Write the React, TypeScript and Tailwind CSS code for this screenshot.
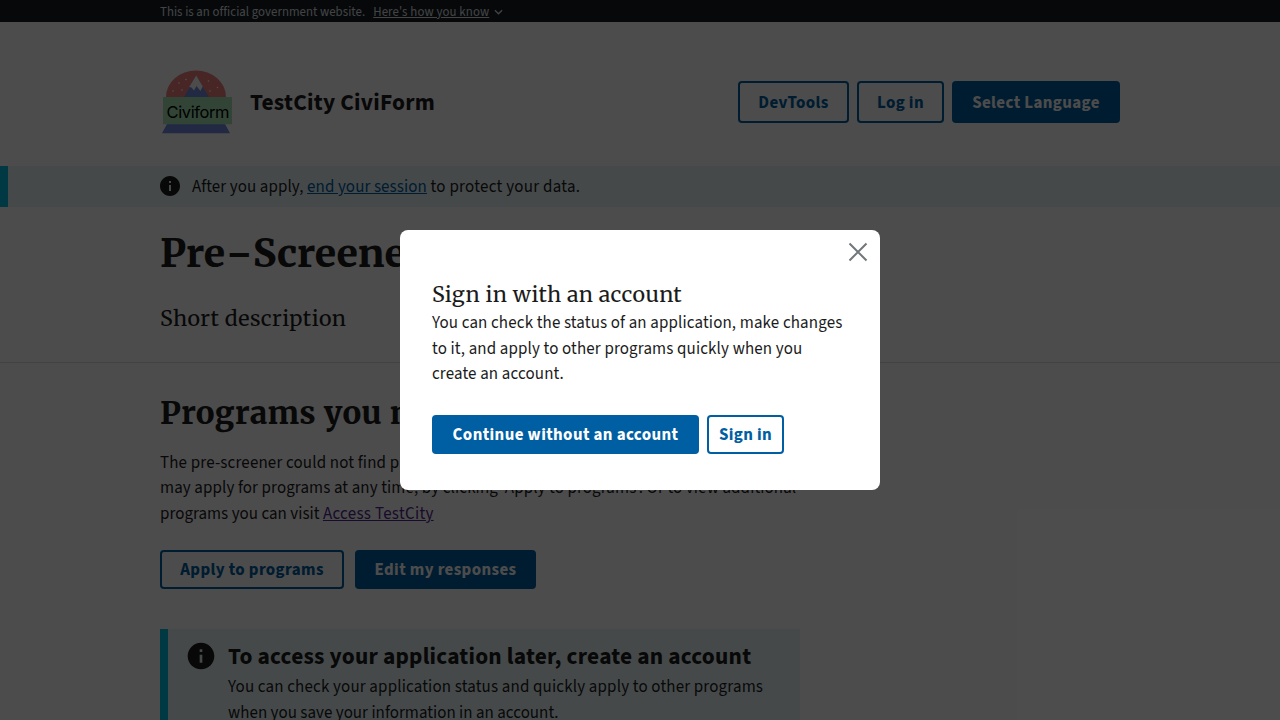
import type { ReactNode } from 'react';

function Button({ solid, className, children }: { solid?: boolean; className: string; children: ReactNode }) {
  const tone = solid
    ? 'bg-[#005ea2] text-white'
    : 'text-[#005ea2] shadow-[inset_0_0_0_2px_#005ea2]';
  return (
    <button className={`flex shrink-0 items-center justify-center rounded-[4px] pt-0.5 text-[16.96px] leading-none font-bold tracking-[0.38px] whitespace-nowrap ${tone} ${className}`}>
      {children}
    </button>
  );
}

function InfoIcon({ className }: { className: string }) {
  return (
    <svg viewBox="0 0 24 24" fill="currentColor" className={className}>
      <path d="M12 2C6.48 2 2 6.48 2 12s4.48 10 10 10 10-4.48 10-10S17.52 2 12 2zm1 15h-2v-6h2v6zm0-8h-2V7h2v2z" />
    </svg>
  );
}

function Logo() {
  return (
    <svg viewBox="0 0 72 66" className="h-[66px] w-[72px] shrink-0">
      <path d="M6 28a30 26.500 0 0 1 60 0z" fill="#f28080" />
      <path d="M24 28 36 7l13 21z" fill="#7189e0" />
      <path d="m29.200 18 7-11.500 6.500 11-2.200 4.500-4-5-2.500 4.500-2.500-3z" fill="#fff" />
      <g fill="#fff">
        <circle cx="26" cy="10.500" r=".8" />
        <circle cx="19" cy="14" r=".8" />
        <circle cx="13" cy="22" r=".8" />
        <circle cx="22" cy="21" r=".8" />
        <circle cx="48.500" cy="12" r=".8" />
        <circle cx="57.500" cy="18.500" r=".8" />
        <circle cx="50" cy="22" r=".8" />
      </g>
      <path d="M7 55h58l5 9.200H2z" fill="#7189e0" />
      <path d="M3 28h69v27.200H3z" fill="#a4e5b4" />
      <text x="6.500" y="48.500" fontSize="16.500" textLength="63" className="fill-black font-['Inter','Liberation_Sans',sans-serif]">
        Civiform
      </text>
    </svg>
  );
}

export default function App() {
  return (
    <div className="relative h-[720px] w-[1280px] overflow-hidden bg-white font-['Source_Sans_3','Noto_Sans_CJK_SC',sans-serif] text-[16.96px] leading-[25.44px] text-[#1b1b1b]">
      <div className="flex h-[22px] items-center bg-[#171b22] px-40 pt-0.5 text-[12.8px] leading-none text-[#dfe1e2]">
        <span className="tracking-[0.05px]">This is an official government website.</span>
        <a className="ml-2 tracking-[0.13px] underline">Here's how you know</a>
        <svg viewBox="0 0 10 6" className="ml-[5px] h-[6px] w-[9px]" fill="none" stroke="currentColor" strokeWidth="1.5">
          <path d="m1 1 4 4 4-4" />
        </svg>
      </div>

      <header className="flex h-36 items-center px-40 pt-4">
        <Logo />
        <span className="ml-[18px] pt-0.5 text-[23.4px] leading-none font-bold tracking-[0.24px] whitespace-nowrap">TestCity CiviForm</span>
        <nav className="ml-auto flex gap-2">
          <Button className="h-[42px] w-[111px]">DevTools</Button>
          <Button className="h-[42px] w-[87px]">Log in</Button>
          <Button solid className="h-[42px] w-[168px]">Select Language</Button>
        </nav>
      </header>

      <section className="flex h-[41px] items-start border-l-8 border-[#00bde3] bg-[#e7f6f8] pt-2 pl-[150px]">
        <InfoIcon className="size-6" />
        <p className="mt-px ml-[10px] tracking-[0.1px] whitespace-nowrap">
          After you apply, <a className="text-[#005ea2] underline">end your session</a>
          <span className="tracking-[0.27px]"> to protect your data.</span>
        </p>
      </section>

      <section className="h-[156px] border-b border-[#dfe1e2] px-40 pt-[23px] font-['Merriweather','Noto_Serif',serif]">
        <h1 className="text-[39.04px] leading-[48px] font-extrabold whitespace-nowrap">
          Pre<span className="mx-[2.5px] inline-block scale-x-125">-</span>Screener
        </h1>
        <p className="mt-[25px] text-[21.44px] leading-8 tracking-[0.4px]">Short description</p>
      </section>

      <main className="w-[800px] pl-40">
        <h2 className="pt-[30px] font-['Merriweather','Noto_Serif',serif] text-[31.2px] leading-10 font-extrabold tracking-[0.33px] whitespace-nowrap">Programs you may qualify for</h2>
        <p className="pt-[18px] tracking-[0.11px] whitespace-nowrap">
          <span className="tracking-[0.16px]">The pre-screener could not find programs you may qualify for. You</span>
          <br />
          may apply for programs at any time, by clicking 'Apply to programs'. Or to view additional
          <br />
          <span className="tracking-[0.03px]">programs you can visit </span>
          <a className="tracking-[0.3px] text-[#54278f] underline">Access TestCity</a>
        </p>
        <div className="flex gap-[11px] pt-[23px]">
          <Button className="h-[39px] w-[184px]">Apply to programs</Button>
          <Button solid className="h-[39px] w-[181px]">Edit my responses</Button>
        </div>
        <aside className="mt-10 flex h-32 border-l-8 border-[#00bde3] bg-[#e7f6f8] pt-[11px] pl-[17px]">
          <InfoIcon className="size-8 shrink-0" />
          <div className="ml-[11px] whitespace-nowrap">
            <h3 className="text-[23.4px] leading-[34px] font-bold tracking-[0.22px]">To access your application later, create an account</h3>
            <p className="pt-px">
              <span className="tracking-[0.165px]">You can check your application status and quickly apply to other programs</span>
              <br />
              <span className="tracking-[0.03px]">when you save your information in an account.</span>
            </p>
          </div>
        </aside>
      </main>

      <div className="absolute inset-0 flex items-center justify-center bg-black/70">
        <div role="dialog" className="relative h-[260px] w-[480px] rounded-lg bg-white px-8 pt-12">
          <button aria-label="Close" className="absolute top-3 right-3">
            <svg viewBox="0 0 20 20" className="size-5" fill="none" stroke="#71767a" strokeWidth="2">
              <path d="m1.500 1.500 17 17m0-17-17 17" />
            </svg>
          </button>
          <h2 className="pt-px font-['Merriweather','Noto_Serif',serif] text-[21.44px] leading-8 tracking-[0.35px]">Sign in with an account</h2>
          <p className="mt-[0.2px] tracking-[0.14px] whitespace-nowrap">
            You can check the status of an application, make changes
            <br />
            to it, and apply to other programs quickly when you
            <br />
            create an account.
          </p>
          <div className="mt-[27.5px] flex gap-2">
            <Button solid className="h-[39px] w-[267px]">Continue without an account</Button>
            <Button className="h-[39px] w-[77px]">Sign in</Button>
          </div>
        </div>
      </div>
    </div>
  );
}
